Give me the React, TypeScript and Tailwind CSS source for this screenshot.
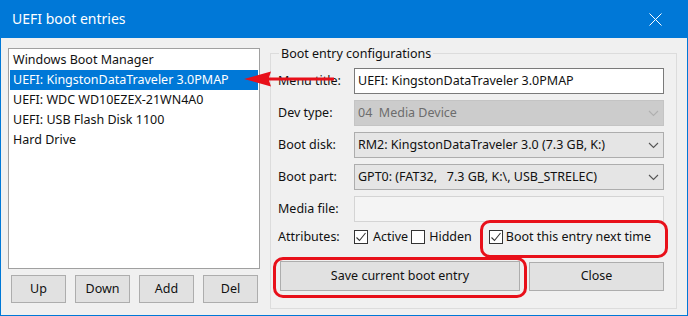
import React from 'react';

const entries = [
  'Windows Boot Manager',
  'UEFI: KingstonDataTraveler 3.0PMAP',
  'UEFI: WDC WD10EZEX-21WN4A0',
  'UEFI: USB Flash Disk 1100',
  'Hard Drive',
];

const Chevron: React.FC<{ color: string }> = ({ color }) => (
  <svg width="11" height="7" viewBox="0 0 11 7" className="mr-[4px]">
    <path d="M1 1 L5.5 5.5 L10 1" fill="none" stroke={color} strokeWidth="1.1" />
  </svg>
);

const CheckBox: React.FC<{ checked?: boolean }> = ({ checked }) => (
  <div className="w-[14px] h-[14px] bg-white border border-[#333] flex items-center justify-center shrink-0">
    {checked && (
      <svg width="12" height="12" viewBox="0 0 12 12">
        <path d="M1.5 6.5 L4.5 9.5 L10.5 2" fill="none" stroke="#333" strokeWidth="1.1" />
      </svg>
    )}
  </div>
);

const Row: React.FC<{ label: string; children: React.ReactNode }> = ({ label, children }) => (
  <div className="flex items-center h-[26px]">
    <div className="w-[76px] shrink-0">{label}</div>
    {children}
  </div>
);

const App: React.FC = () => {
  return (
    <div className="w-[688px] h-[316px] bg-[#0078d7] px-px pb-px flex flex-col font-['Noto_Sans',sans-serif] text-[12.5px] text-[#111] leading-none">
      <div className="h-[38px] shrink-0 flex items-center justify-between pl-[11px] pr-[25px] text-white text-[14px]">
        <span>UEFI boot entries</span>
        <svg width="13" height="13" viewBox="0 0 13 13">
          <path d="M0.5 0.5 L12.5 12.5 M12.5 0.5 L0.5 12.5" stroke="white" strokeWidth="1" />
        </svg>
      </div>

      <div className="flex-1 bg-[#f0f0f0] relative flex pl-[7px] pt-[10px]">
        {/* left column */}
        <div className="w-[252px] flex flex-col">
          <div className="h-[221px] bg-white border border-[#a0a0a0] p-px">
            {entries.map((e, i) => (
              <div
                key={e}
                className={`h-[20px] flex items-center pl-[3px] ${i === 1 ? 'bg-[#0078d7] text-white' : ''}`}
              >
                {e}
              </div>
            ))}
          </div>
          <div className="mt-[6px] flex gap-[9px] pl-[3px]">
            {['Up', 'Down', 'Add', 'Del'].map((b) => (
              <div
                key={b}
                className="w-[55px] h-[28px] bg-[#e1e1e1] border border-[#adadad] flex items-center justify-center"
              >
                {b}
              </div>
            ))}
          </div>
        </div>

        {/* group box */}
        <div className="relative ml-[10px] mt-[5px] w-[407px] h-[256px] border border-[#dcdcdc] pt-[14px] pl-[7px] pr-[12px] flex flex-col">
          <div className="absolute left-[8px] -top-[9px] bg-[#f0f0f0] px-[2px] leading-[17px]">
            Boot entry configurations
          </div>

          <div className="flex flex-col gap-[6px]">
            <Row label="Menu title:">
              <div className="flex-1 h-full bg-white border border-[#7a7a7a] flex items-center pl-[3px]">
                UEFI: KingstonDataTraveler 3.0PMAP
              </div>
            </Row>
            <Row label="Dev type:">
              <div className="flex-1 h-full bg-[#cccccc] border border-[#c4c4c4] flex items-center justify-between pl-[3px] text-[#6d6d6d]">
                <span>04&nbsp; Media Device</span>
                <Chevron color="#b0b0b0" />
              </div>
            </Row>
            <Row label="Boot disk:">
              <div className="flex-1 h-full bg-[#e5e5e5] border border-[#adadad] flex items-center justify-between pl-[3px]">
                <span>RM2: KingstonDataTraveler 3.0 (7.3 GB, K:)</span>
                <Chevron color="#555" />
              </div>
            </Row>
            <Row label="Boot part:">
              <div className="flex-1 h-full bg-[#e5e5e5] border border-[#adadad] flex items-center justify-between pl-[3px]">
                <span className="whitespace-pre">GPT0: (FAT32,   7.3 GB, K:\, USB_STRELEC)</span>
                <Chevron color="#555" />
              </div>
            </Row>
            <Row label="Media file:">
              <div className="flex-1 h-full bg-[#f4f4f4] border border-[#d4d4d4]" />
            </Row>
          </div>

          <div className="flex items-center h-[16px] mt-[7px]">
            <div className="w-[76px] shrink-0">Attributes:</div>
            <CheckBox checked />
            <span className="ml-[5px] mr-[3px]">Active</span>
            <CheckBox />
            <span className="ml-[4px]">Hidden</span>
            <div className="ml-[17px] flex items-center">
              <CheckBox checked />
              <span className="ml-[3px]">Boot this entry next time</span>
            </div>
          </div>

          <div className="flex mt-[16px] pl-[2px] gap-[9px] items-center">
            <div className="w-[240px] h-[30px] bg-[#e1e1e1] border border-[#adadad] flex items-center justify-center">
              Save current boot entry
            </div>
            <div className="w-[135px] h-[29px] bg-[#e1e1e1] border border-[#adadad] flex items-center justify-center">
              Close
            </div>
          </div>

          {/* annotations */}
          <div className="absolute left-[209px] top-[166px] w-[188px] h-[38px] border-[3px] border-[#e8101a] rounded-[10px]" />
          <div className="absolute left-[2px] top-[203px] w-[254px] h-[41px] border-[3px] border-[#e8101a] rounded-[10px]" />
        </div>

        <svg className="absolute left-[242px] top-[32px]" width="92" height="18" viewBox="0 0 92 18">
          <path d="M1 9 L28 1.5 L26 7.5 L91 7.5 L91 10.5 L26 10.5 L28 16.5 Z" fill="#e8101a" />
        </svg>
      </div>
    </div>
  );
};

export default App;
